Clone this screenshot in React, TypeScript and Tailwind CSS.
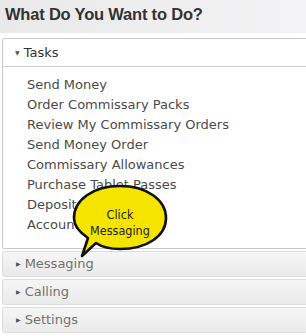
const TASKS = [
  'Send Money',
  'Order Commissary Packs',
  'Review My Commissary Orders',
  'Send Money Order',
  'Commissary Allowances',
  'Purchase Tablet Passes',
  'Deposit/Commissary',
  'Account Balance',
];

const CLOSED = ['Messaging', 'Calling', 'Settings'];

function Callout() {
  return (
    <div className="absolute left-[72px] top-[182px] w-[100px] h-[78px]">
      <svg width="100" height="78" viewBox="0 0 100 78" className="absolute inset-0">
        <path
          d="M48 4 C75 4 94 18 94 36 C94 54 75 67 48 67 C38 67 30 65 24 61 L10 74 L16 56 C7 50 2 43 2 36 C2 18 21 4 48 4 Z"
          fill="#f5e400"
          stroke="#111"
          strokeWidth="2.6"
          strokeLinejoin="round"
        />
      </svg>
      <div className="absolute left-[2px] top-[25px] w-[92px] text-center text-[12.5px] leading-[16px] text-[#222] font-['DejaVu_Sans_Condensed','DejaVu_Sans',sans-serif]">
        Click
        <br />
        Messaging
      </div>
    </div>
  );
}

export default function App() {
  return (
    <div className="relative w-[306px] h-[336px] overflow-hidden bg-white font-['DejaVu_Sans',sans-serif]">
      <div className="h-[33px] bg-gradient-to-r from-[#e9e9e9] to-[#f3f3f5] pl-[5px] pt-[3px]">
        <h1 className="text-[16.5px] leading-[22px] font-bold tracking-[-0.2px] text-[#333] font-['Liberation_Sans',Arial,sans-serif]">
          What Do You Want to Do?
        </h1>
      </div>

      <div className="mt-[5px] ml-[2px] mr-[-8px] flex flex-col gap-[2px]">
        <div className="border border-[#c8c8c8] rounded-[2px]">
          <div className="h-[28px] flex items-center pl-[12px] gap-[4px] border-b border-[#cfcfcf] text-[13px] text-[#333]">
            <span className="text-[6px] leading-none text-[#555]">▼</span>
            <span>Tasks</span>
          </div>
          <ul className="pt-[8px] pb-[13px] pl-[24px] text-[13px] leading-[20px] text-[#4a4a4a]">
            {TASKS.map((t) => (
              <li key={t}>{t}</li>
            ))}
          </ul>
        </div>

        {CLOSED.map((c) => (
          <div
            key={c}
            className="h-[26px] flex items-center pl-[13px] gap-[4px] border border-[#dcdcdc] rounded-[3px] bg-gradient-to-b from-[#f6f6f6] to-[#eaeaea] text-[13px] text-[#727272]"
          >
            <span className="text-[6px] leading-none text-[#555]">▶</span>
            <span>{c}</span>
          </div>
        ))}
      </div>

      <Callout />
    </div>
  );
}
